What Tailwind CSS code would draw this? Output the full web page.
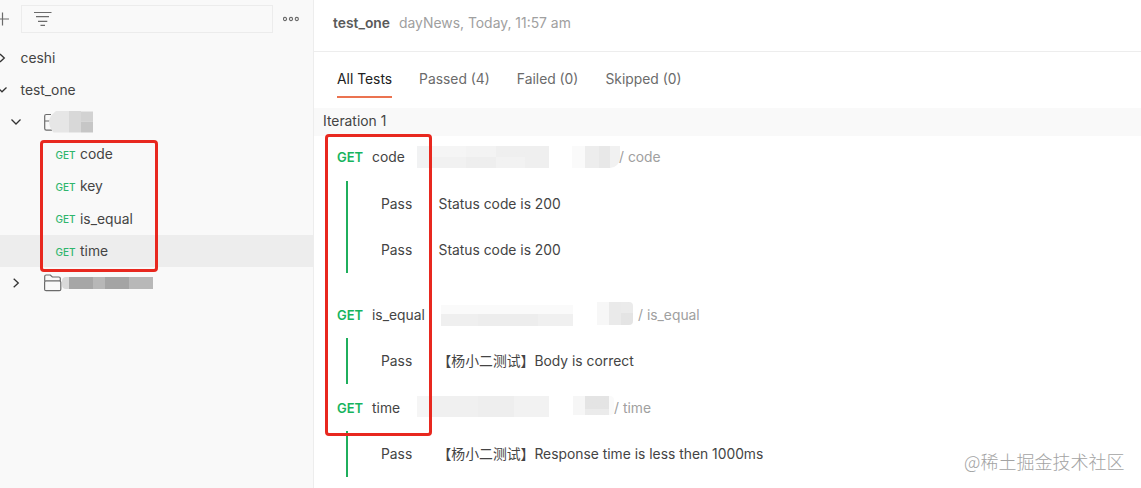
<!DOCTYPE html>
<html lang="en">
<head>
  <meta charset="UTF-8" />
  <title>Collection Runner</title>
  <script src="https://cdn.jsdelivr.net/npm/@tailwindcss/browser@4"></script>
</head>
<body class="relative flex w-[1141px] h-[488px] overflow-hidden bg-white text-[#444] text-[13.85px] leading-5 whitespace-nowrap font-['Inter','Noto_Sans_CJK_SC',sans-serif]">

  <!-- Sidebar -->
  <aside class="w-[314px] shrink-0 bg-[#f9f9f9] border-r border-[#ededed]">
    <div class="flex items-center h-[42px] pb-1">
      <svg class="w-[10px] h-4 shrink-0" viewBox="0 0 10 16" fill="none" stroke="#6b6b6b" stroke-width="1.2"><path d="M-4 8H9M2.5 1.5v13" /></svg>
      <div class="flex items-center ml-[11px] w-[252px] h-[28px] pl-3 border border-[#ececec]">
        <svg class="w-[18px] h-4" viewBox="0 0 18 16" fill="none" stroke="#6b6b6b" stroke-width="1.2"><path d="M0 1.5h17.5M2 5.6h13M4 10.4h9.3M6.5 14.4h4.5" /></svg>
      </div>
      <svg class="w-[17px] h-[6px] ml-[10px]" viewBox="0 0 17 6" fill="none" stroke="#6b6b6b" stroke-width="1.1"><circle cx="2" cy="3" r="1.6" /><circle cx="8" cy="3" r="1.6" /><circle cx="13.8" cy="3" r="1.6" /></svg>
    </div>

    <div class="flex items-center h-8">
      <svg class="w-[6px] h-[10px]" viewBox="0 0 6 10" fill="none" stroke="#333" stroke-width="1.3"><path d="M0 1l4.3 4L0 9" /></svg>
      <span class="ml-[14.5px]">ceshi</span>
    </div>
    <div class="flex items-center h-8">
      <svg class="w-[8px] h-[6px]" viewBox="0 0 8 6" fill="none" stroke="#333" stroke-width="1.3"><path d="M-2.5 0.5l4.5 4.3 4.5-4.3" /></svg>
      <span class="ml-[12.5px]">test_one</span>
    </div>
    <div class="flex items-center h-8 pl-[11px]">
      <svg class="w-[10px] h-[6px]" viewBox="0 0 10 6" fill="none" stroke="#333" stroke-width="1.3"><path d="M0.5 0.5L5 5l4.5-4.5" /></svg>
      <svg class="w-[50px] h-[24px] ml-[23px]" viewBox="0 0 50 24">
        <path d="M7 4.5H2.3Q.7 4.5 .7 6V18.5q0 1.6 1.6 1.6H8M.7 11H6" fill="none" stroke="#6b6b6b" stroke-width="1.2" />
        <path d="M12 1h13v21.5H9.5Q5 17 5 11.5q0-5 7-10.5z" fill="#e6e6e6" />
        <path d="M25 1h12v21.5H25z" fill="#d8d8d8" />
        <path d="M37 1.5h12v10H37z" fill="#d2d2d2" />
        <path d="M37 11.5h12v11H37z" fill="#c6c6c6" />
      </svg>
    </div>
    <div class="flex items-center h-8 pl-[55.5px]"><span class="w-[24.5px] text-[10px] font-medium text-[#2fb56c] pt-px">GET</span>code</div>
    <div class="flex items-center h-8 pl-[55.5px]"><span class="w-[24.5px] text-[10px] font-medium text-[#2fb56c] pt-px">GET</span>key</div>
    <div class="flex items-center h-[33px] pl-[55.5px]"><span class="w-[24.5px] text-[10px] font-medium text-[#2fb56c] pt-px">GET</span>is_equal</div>
    <div class="flex items-center h-8 pl-[55.5px] bg-[#ededed]"><span class="w-[24.5px] text-[10px] font-medium text-[#2fb56c] pt-px">GET</span>time</div>
    <div class="flex items-center h-8 pl-[13px]">
      <svg class="w-[7px] h-[10px]" viewBox="0 0 7 10" fill="none" stroke="#333" stroke-width="1.3"><path d="M0.7 0.7L5.3 5 0.7 9.3" /></svg>
      <svg class="w-[18px] h-[18px] ml-[24px]" viewBox="0 0 18 18" fill="none" stroke="#6b6b6b" stroke-width="1.2"><path d="M.7 7V2.4Q.7 1 2.1 1h4.2l2 2h6.6q1.4 0 1.4 1.4V7M2 6.8h13.4q1.4 0 1.4 1.4v7q0 1.5-1.5 1.5H2.1Q.6 16.7.6 15.2v-7Q.6 6.8 2 6.8z" /></svg>
      <div class="flex h-[12px]">
        <div class="w-[7px] rounded-l bg-[#d9d9d9]"></div>
        <div class="w-6 bg-[#a6a6a6]"></div>
        <div class="w-3 bg-[#b7b7b7]"></div>
        <div class="w-6 bg-[#a4a4a4]"></div>
        <div class="w-6 bg-[#b8b8b8]"></div>
      </div>
    </div>
  </aside>

  <!-- Run results -->
  <main class="flex-1">
    <div class="flex items-center h-[52px] pb-[5px] pl-[19px] border-b border-[#ededed]">
      <span class="font-semibold text-[#5a5a5a]">test_one</span>
      <span class="ml-[9px] text-[13.9px] text-[#a0a0a0]">dayNews, Today, 11:57 am</span>
    </div>
    <div class="flex items-start h-[56px] pt-[17px] pl-[23px] text-[#6b6b6b]">
      <div class="h-[29px] border-b-2 border-[#eb7350] text-[#212121]">All Tests</div>
      <div class="ml-[27px]">Passed (4)</div>
      <div class="ml-[27px]">Failed (0)</div>
      <div class="ml-[27px]">Skipped (0)</div>
    </div>
    <div class="flex items-center h-7 pb-[2px] pl-[9px] bg-[#f9f9f9]">Iteration 1</div>

    <div class="flex items-center h-[45px] pb-[3px] pl-[23px]">
      <span class="w-[35px] text-[13px] font-semibold text-[#16b45e]">GET</span>
      <span class="w-[45px]">code</span>
      <div class="flex h-[22px]">
        <div class="w-[14px] bg-[#f1f2f3]"></div>
        <div class="w-[35px] bg-linear-to-b from-[#f5f5f5] from-50% to-[#f1f1f1] to-50%"></div>
        <div class="w-[30px] bg-linear-to-b from-[#f3f3f3] from-50% to-[#eeeeee] to-50%"></div>
        <div class="w-[29px] bg-linear-to-b from-[#efefef] from-50% to-[#f2f2f2] to-50%"></div>
        <div class="w-[24px] bg-[#efefef]"></div>
      </div>
      <div class="flex h-[22px] ml-[23px]">
        <div class="w-[13px] bg-[#fafafa]"></div><div class="w-[14px] bg-[#ededed]"></div><div class="w-[11px] bg-[#e8e8e8]"></div><div class="w-[10px] rounded-br-xl bg-[#f1f1f1]"></div>
      </div>
      <span class="-ml-px text-[#a0a0a0]">/ code</span>
    </div>
    <div class="ml-8 border-l-2 border-[#1fae5c]">
      <div class="flex items-center h-[46px] pl-[33px]"><span class="w-[57.5px]">Pass</span>Status code is 200</div>
      <div class="flex items-center h-[46px] pl-[33px]"><span class="w-[57.5px]">Pass</span>Status code is 200</div>
    </div>

    <div class="flex items-center h-[46px] mt-[19px] pl-[23px]">
      <span class="w-[35px] text-[13px] font-semibold text-[#16b45e]">GET</span>
      <span class="w-[69px]">is_equal</span>
      <div class="flex flex-col w-[132px] h-[21px]">
        <div class="h-[9px] bg-[#fafafa]"></div>
        <div class="flex h-3"><div class="w-[37px] bg-[#efefef]"></div><div class="w-[60px] bg-[#ededed]"></div><div class="w-[35px] bg-[#f0f0f0]"></div></div>
      </div>
      <div class="flex h-[23px] ml-6 -mt-[4px]">
        <div class="w-[12px] bg-[#f7f7f7]"></div>
        <div class="w-3 bg-[#eaeaea]"></div>
        <div class="w-3 rounded-r bg-linear-to-b from-[#ebebeb] from-50% to-[#e4e4e4] to-50%"></div>
      </div>
      <span class="ml-[5px] text-[#a0a0a0]">/ is_equal</span>
    </div>
    <div class="ml-8 border-l-2 border-[#1fae5c]">
      <div class="flex items-center h-[46px] pl-[33px]"><span class="w-[57.5px]">Pass</span><span class="-ml-px">【杨小二测试】Body is correct</span></div>
    </div>

    <div class="flex items-center h-[47px] pl-[23px]">
      <span class="w-[35px] text-[13px] font-semibold text-[#16b45e]">GET</span>
      <span class="w-[45px]">time</span>
      <div class="flex h-[21px] -mt-[2px]">
        <div class="w-[12px] bg-[#f5f5f5]"></div><div class="w-[49px] bg-[#f0f0f0]"></div><div class="w-[36px] bg-[#eeeeee]"></div><div class="w-[35px] bg-[#f2f2f2]"></div>
      </div>
      <div class="flex h-[19px] ml-6 -mt-[4px]">
        <div class="w-[12px] bg-[#f6f6f6]"></div>
        <div class="w-6 bg-linear-to-b from-[#e4e4e4] from-70% to-[#ebebeb] to-70%"></div>
        <div class="w-[5px] rounded-r bg-[#fafafa]"></div>
      </div>
      <span class="text-[#a0a0a0]">/ time</span>
    </div>
    <div class="ml-8 border-l-2 border-[#1fae5c]">
      <div class="flex items-center h-[46px] pl-[33px]"><span class="w-[57.5px]">Pass</span><span class="-ml-px">【杨小二测试】Response time is less then 1000ms</span></div>
    </div>
  </main>

  <!-- Highlight boxes -->
  <div class="absolute left-[40px] top-[140px] w-[118px] h-[132px] border-3 border-[#e8281f] rounded"></div>
  <div class="absolute left-[325px] top-[134px] w-[107px] h-[302px] border-3 border-[#e8281f] rounded"></div>

  <!-- Watermark -->
  <div class="absolute left-[964px] top-[449px] text-[18px] leading-6 text-[#a3a3a3] font-['Noto_Sans_CJK_SC',sans-serif] font-light">@稀土掘金技术社区</div>
</body>
</html>
